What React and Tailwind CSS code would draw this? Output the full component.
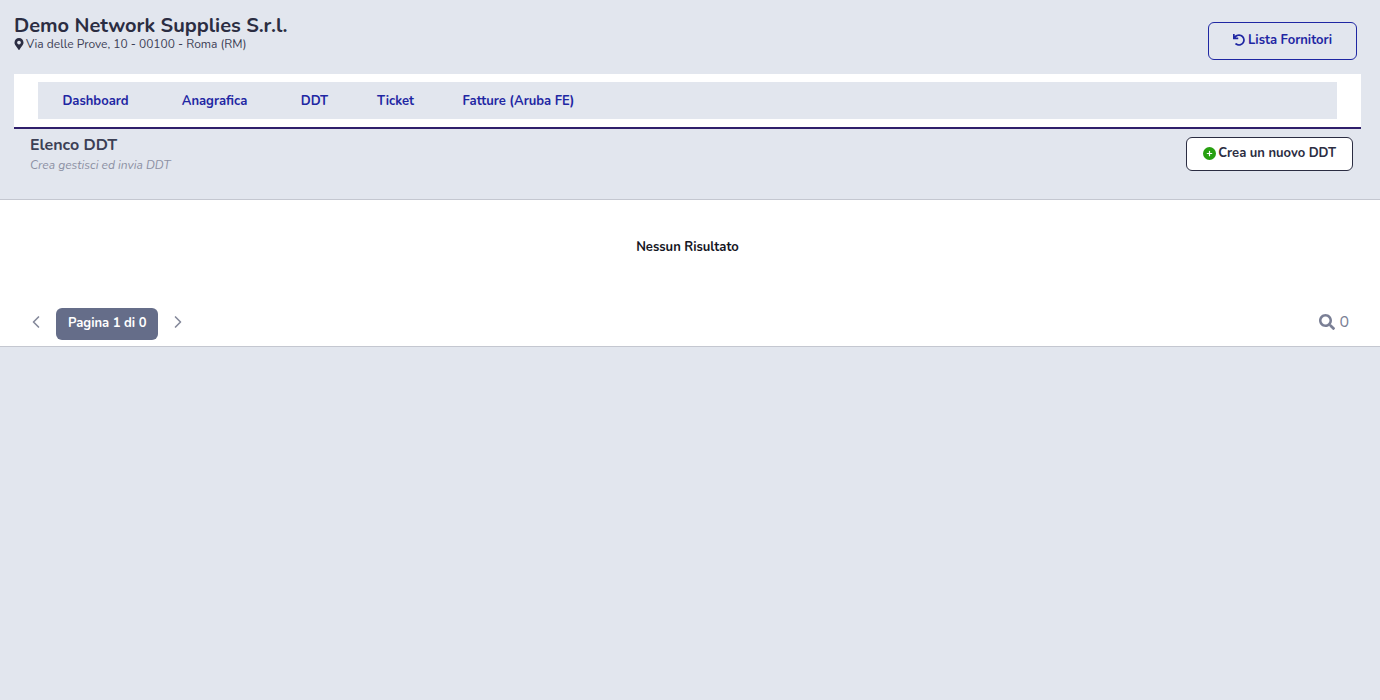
import { ChevronLeft, ChevronRight } from 'lucide-react';
import { FaMapMarkerAlt, FaSearch, FaUndo } from 'react-icons/fa';
import { FaCirclePlus } from 'react-icons/fa6';

const navItems = [
  { label: 'Dashboard', width: 'min-w-[115px]' },
  { label: 'Anagrafica', width: 'min-w-[115px]' },
  { label: 'DDT', width: 'min-w-[77px]' },
  { label: 'Ticket', width: 'min-w-[77px]' },
  { label: 'Fatture (Aruba FE)', width: 'min-w-[161px]' },
];

function SupplierHeader() {
  return (
    <header className="flex items-start justify-between pt-[14px] pr-1">
      <div>
        <h1 className="text-[20px] leading-6 font-bold text-[#2b2d42]">
          Demo Network Supplies S.r.l.
        </h1>
        <p className="flex items-center gap-0.5 text-[12px] leading-3 text-[#3c4055]">
          <FaMapMarkerAlt className="h-3 w-[10px] text-[#2b2d42]" />
          Via delle Prove, 10 - 00100 - Roma (RM)
        </p>
      </div>
      <button
        type="button"
        className="mt-2 flex h-[38px] items-center gap-[3px] rounded-md border border-[#1f27a3] px-6 text-[13px] font-bold text-[#1f27a3]"
      >
        <FaUndo className="mb-0.5 size-3" />
        Lista Fornitori
      </button>
    </header>
  );
}

function SupplierNav() {
  return (
    <nav className="mt-[14px] border-b-2 border-[#2f1f6b] bg-white px-6 py-2">
      <ul className="flex h-[37px] items-center gap-1 bg-[#e2e6ee] pb-0.5">
        {navItems.map((item) => (
          <li key={item.label} className={`text-center ${item.width}`}>
            <a href="#" className="text-[13px] leading-5 font-bold text-[#1f27a3]">
              {item.label}
            </a>
          </li>
        ))}
      </ul>
    </nav>
  );
}

function ListHeader() {
  return (
    <div className="flex h-[70px] items-start justify-between pt-2 pr-[27px] pl-[30px]">
      <div>
        <h2 className="text-[16px] leading-4 font-bold text-[#3c4055]">Elenco DDT</h2>
        <p className="mt-1 text-[12px] leading-4 text-[#8c90a3] italic">
          Crea gestisci ed invia DDT
        </p>
      </div>
      <button
        type="button"
        className="flex h-[34px] items-center gap-0.5 rounded-md border border-[#2b2d42] bg-white px-4 text-[13px] font-bold text-[#2b2d42]"
      >
        <FaCirclePlus className="mb-0.5 size-[13px] text-[#27a010]" />
        Crea un nuovo DDT
      </button>
    </div>
  );
}

function Pagination() {
  return (
    <div className="flex h-8 items-center justify-between px-[26px]">
      <div className="flex items-center gap-[10px]">
        <button type="button" aria-label="Pagina precedente" className="pb-1 text-[#85899b]">
          <ChevronLeft className="size-5" />
        </button>
        <span className="flex h-8 items-center rounded-md bg-[#656d89] px-3 text-[13px] font-bold text-white">
          Pagina 1 di 0
        </span>
        <button type="button" aria-label="Pagina successiva" className="pb-1 text-[#85899b]">
          <ChevronRight className="size-5" />
        </button>
      </div>
      <div className="flex items-center gap-1 pr-[5px] pb-1 text-[16px] leading-6 text-[#7a7f95]">
        <FaSearch className="size-4" />
        0
      </div>
    </div>
  );
}

function App() {
  return (
    <div className="min-h-screen bg-[#e2e6ee] font-['Nunito','Lato',sans-serif]">
      <div className="pr-[19px] pl-[14px]">
        <SupplierHeader />
        <SupplierNav />
      </div>
      <ListHeader />
      <main className="border-y border-[#c4c7d0] bg-white pb-1.5">
        <p className="pt-[37px] pr-[5px] pb-[51px] text-center text-[13px] leading-5 font-bold text-[#15161f]">
          Nessun Risultato
        </p>
        <Pagination />
      </main>
    </div>
  );
}

export default App;
